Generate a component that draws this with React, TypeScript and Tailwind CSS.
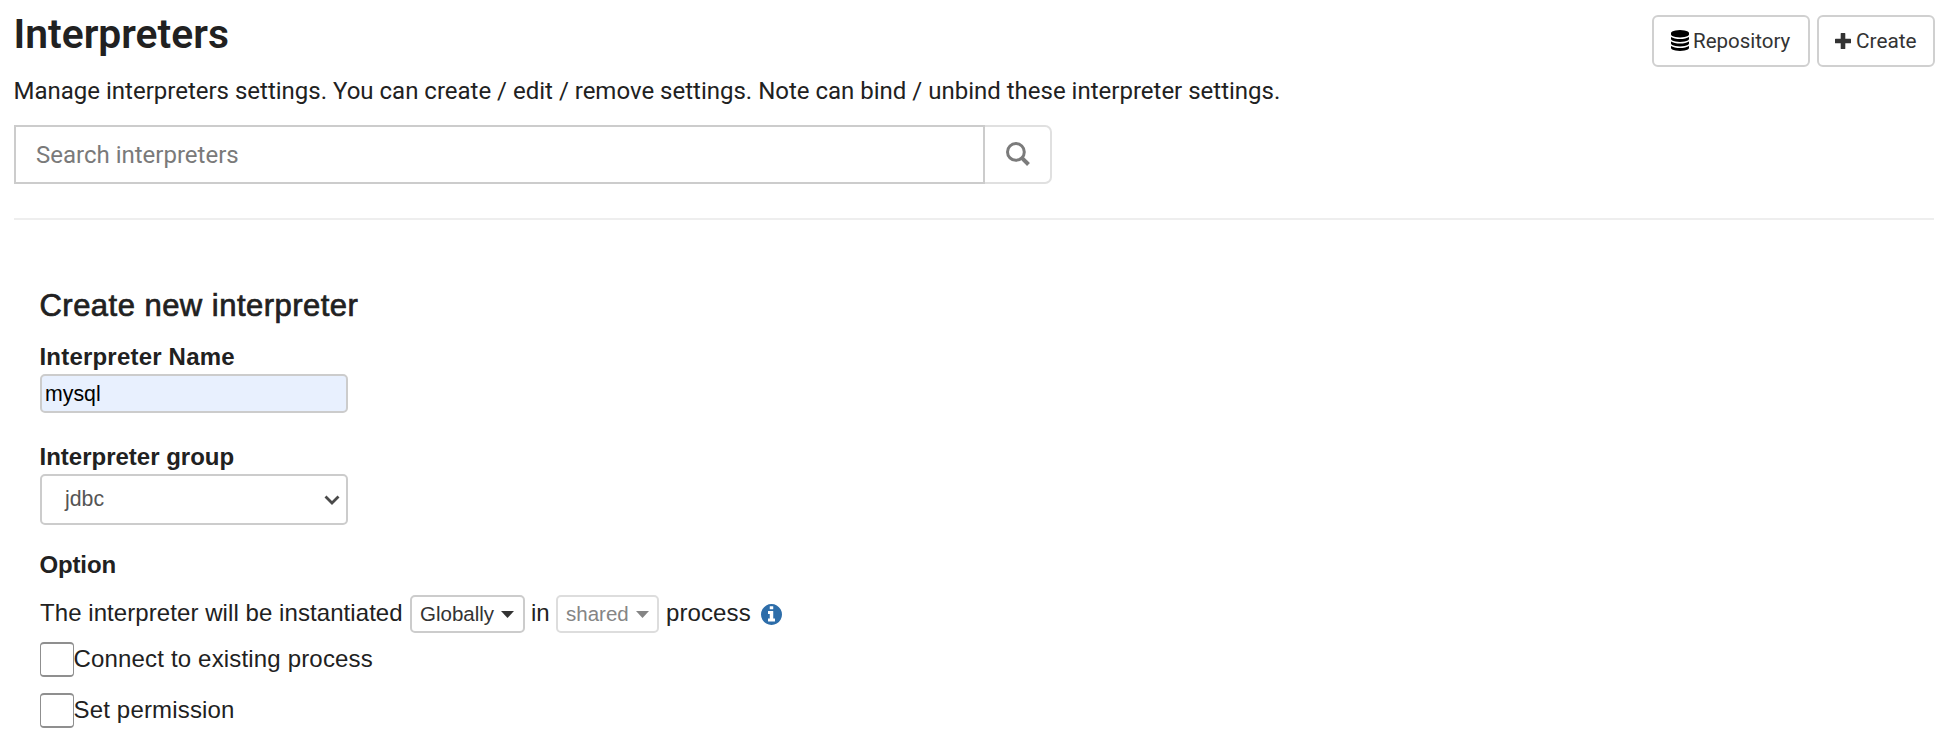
import type { ReactNode } from "react";

function DatabaseIcon() {
  return (
    <svg viewBox="0 0 1536 1792" className="h-[21px] w-[18px] -translate-y-px fill-black">
      <path d="M768 768q237 0 443-43t325-127v170q0 69-103 128t-280 93.500-385 34.500-385-34.500-280-93.500-103-128v-170q119 84 325 127t443 43zM768 1536q237 0 443-43t325-127v170q0 69-103 128t-280 93.500-385 34.500-385-34.500-280-93.500-103-128v-170q119 84 325 127t443 43zM768 1152q237 0 443-43t325-127v170q0 69-103 128t-280 93.500-385 34.500-385-34.500-280-93.500-103-128v-170q119 84 325 127t443 43zM768 0q208 0 385 34.500t280 93.500 103 128v128q0 69-103 128t-280 93.500-385 34.500-385-34.500-280-93.500-103-128v-128q0-69 103-128t280-93.500 385-34.500z" />
    </svg>
  );
}

function InfoIcon() {
  return (
    <svg viewBox="0 128 1536 1536" className="ml-[10px] size-[21px] fill-[#2d6da9]">
      <path d="M1024 1376v-160q0-14-9-23t-23-9h-96v-512q0-14-9-23t-23-9h-320q-14 0-23 9t-9 23v160q0 14 9 23t23 9h96v320h-96q-14 0-23 9t-9 23v160q0 14 9 23t23 9h448q14 0 23-9t9-23zM896 480v-160q0-14-9-23t-23-9h-192q-14 0-23 9t-9 23v160q0 14 9 23t23 9h192q14 0 23-9t9-23zM1536 896q0 209-103 385.500t-279.500 279.500-385.500 103-385.500-103-279.500-279.500-103-385.500 103-385.500 279.500-279.500 385.500-103 385.500 103 279.500 279.500 103 385.500z" />
    </svg>
  );
}

function PlusIcon() {
  return (
    <svg viewBox="0 0 16 16" className="h-4 w-4 fill-[#333]">
      <path d="M6.300 0h3.400q.6 0 .6.6v5.100h5.100q.6 0 .6.6v3.400q0 .6-.6.6h-5.100v5.100q0 .6-.6.6H6.300q-.6 0-.6-.6v-5.100H.6q-.6 0-.6-.6V6.300q0-.6.6-.6h5.100V.6q0-.6.6-.6z" />
    </svg>
  );
}

function SearchIcon() {
  return (
    <svg viewBox="0 0 24 24" className="h-6 w-6 -translate-y-px" fill="none" stroke="#7b7b7b">
      <circle cx="9.900" cy="9.900" r="8.400" strokeWidth="3" />
      <path d="M15.600 15.600l6.900 6.900" strokeWidth="4" />
    </svg>
  );
}

function Caret({ className }: { className: string }) {
  return (
    <svg viewBox="0 0 13 7" className={`h-[7px] w-[13px] ${className}`}>
      <path d="M0 0h13L6.500 7z" />
    </svg>
  );
}

function Label({ children }: { children: ReactNode }) {
  return <label className="-ml-[0.5px] block h-[34px] text-[24px] leading-[34px] font-bold">{children}</label>;
}

function CheckRow({ children, className }: { children: ReactNode; className: string }) {
  return (
    <label className={`flex h-[35px] items-center ${className}`}>
      <input type="checkbox" className="h-[35px] w-[34px] appearance-none rounded-[4px] border-[1.5px] border-y-2 border-[#8f8f8f] bg-white" />
      <span className="-ml-[0.5px] -translate-y-px text-[24px] leading-[35px] tracking-[0.17px]">{children}</span>
    </label>
  );
}

export default function App() {
  return (
    <main className="h-[748px] w-full overflow-hidden bg-white font-['Liberation_Sans',sans-serif] text-[#212121]">
      <header className="mr-[18px] ml-[14px] flex h-[220px] items-start justify-between border-b-2 border-[#eee] pt-[15px] font-[Roboto,sans-serif]">
        <div>
          <h1 className="-ml-[0.5px] text-[40.800px] leading-[38px] font-semibold">Interpreters</h1>
          <p className="-ml-[0.5px] mt-[23px] text-[24px] leading-[30px]">
            Manage interpreters settings. You can create / edit / remove settings. Note can bind / unbind these interpreter settings.
          </p>
          <div className="mt-[19px] flex h-[59px] w-[1038px]">
            <input
              type="text"
              placeholder="Search interpreters"
              className="w-[971px] border-2 border-[#ccc] pt-px pl-5 text-[24px] placeholder:text-[#7a7a7a]"
            />
            <button className="flex flex-1 items-center justify-center rounded-r-[7px] border-2 border-l-0 border-[#e0e0e0]">
              <SearchIcon />
            </button>
          </div>
        </div>
        <div className="-mr-px flex gap-[7px] text-[#333]">
          <button className="flex h-[52px] w-[158px] items-center rounded-[6px] border-2 border-[#d0d0d0] pl-[17px] text-[20.500px]">
            <DatabaseIcon />
            <span className="ml-[4px]">Repository</span>
          </button>
          <button className="flex h-[52px] w-[118px] items-center rounded-[6px] border-2 border-[#d0d0d0] pl-4 text-[20.800px]">
            <PlusIcon />
            <span className="ml-[5px] translate-y-px">Create</span>
          </button>
        </div>
      </header>

      <section className="px-10 pt-[65px]">
        <h2 className="-ml-[0.5px] h-10 text-[31px] leading-[41px] tracking-[0.47px] [-webkit-text-stroke:0.7px_#212121]">Create new interpreter</h2>
        <div className="pt-[15px]">
          <Label><span className="tracking-[0.2px]">Interpreter Name</span></Label>
          <input
            type="text"
            defaultValue="mysql"
            className="block h-[39px] w-[308px] rounded-[5px] border-2 border-[#ccc] bg-[#e8f0fe] pt-[2px] pl-[3px] text-[21.300px] text-black"
          />
        </div>
        <div className="pt-[27px]">
          <Label>Interpreter group</Label>
          <div className="flex h-[51px] w-[308px] items-center justify-between rounded-[5px] border-2 border-[#ccc] pr-[6px] pl-[23px] text-[21.300px] text-[#555]">
            <span>jdbc</span>
            <svg viewBox="0 0 16 10" className="h-[10px] w-4" fill="none" stroke="#4a4a4a" strokeWidth="2.800">
              <path d="M1.500 1.500L8 8l6.500-6.500" />
            </svg>
          </div>
        </div>
        <div className="pt-[23px]">
          <Label><span className="tracking-[-0.15px]">Option</span></Label>
        </div>
        <div className="mt-[13px] flex h-[38px] items-center text-[24px]">
          <span className="w-[370px] -translate-y-px tracking-[0.07px] whitespace-nowrap">The interpreter will be instantiated</span>
          <button className="flex h-[38px] w-[115px] items-center rounded-[5px] border-2 border-[#ccc] pl-2 text-[20.500px] text-[#333]">
            Globally
            <Caret className="ml-[7px] fill-[#333]" />
          </button>
          <span className="w-[31px] -translate-y-px pl-[6px]">in</span>
          <button className="flex h-[38px] w-[103px] items-center rounded-[5px] border-2 border-[#ddd] pl-2 text-[20.500px] text-[#858585]">
            shared
            <Caret className="ml-[7px] fill-[#858585]" />
          </button>
          <span className="-translate-y-px pl-[7px] tracking-[0.1px]">process</span>
          <InfoIcon />
        </div>
        <CheckRow className="mt-[9px]">Connect to existing process</CheckRow>
        <CheckRow className="mt-[16px]">Set permission</CheckRow>
      </section>
    </main>
  );
}
